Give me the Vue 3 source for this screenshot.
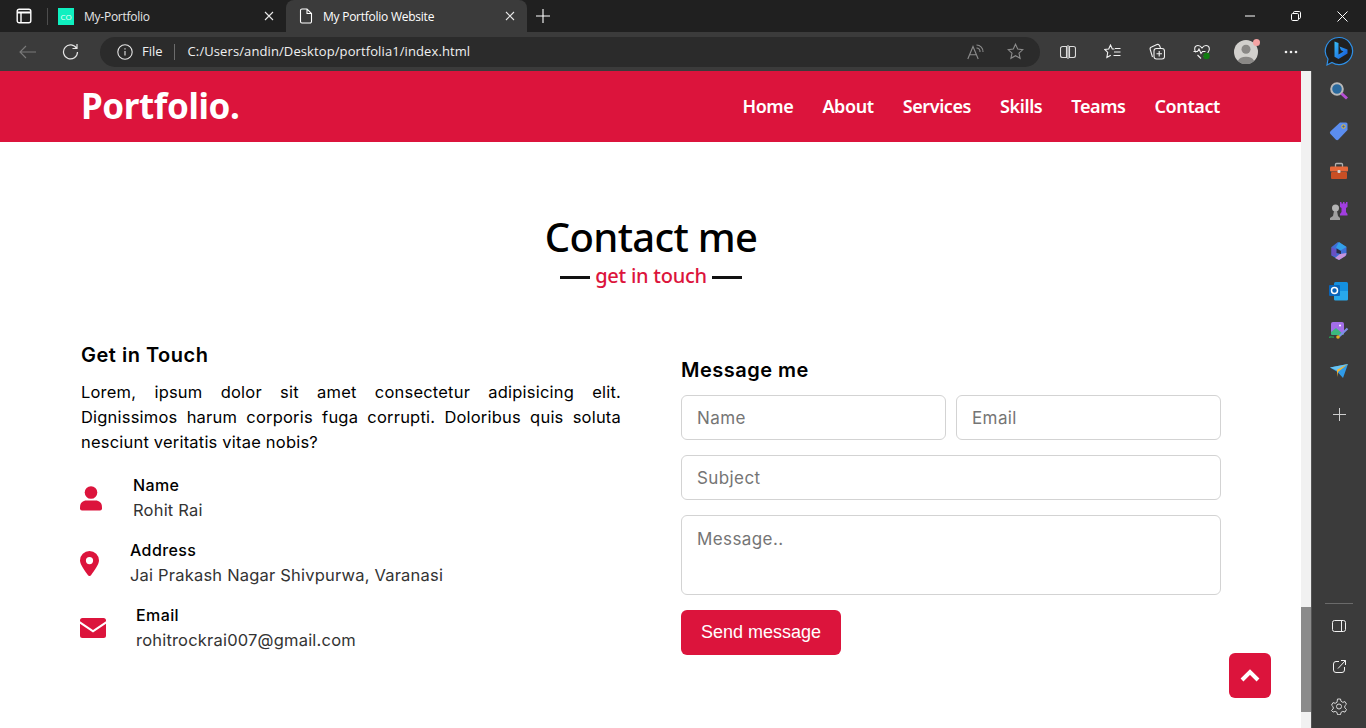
<script setup>
const navLinks = ['Home', 'About', 'Services', 'Skills', 'Teams', 'Contact']
</script>

<template>
  <div class="window">
    <!-- browser tab strip -->
    <div class="tabstrip">
      <svg class="tabs-btn" width="16" height="16" viewBox="0 0 16 16" fill="none" stroke="#fff" stroke-width="1.400"><rect x="1.200" y="1.200" width="13.600" height="13.600" rx="2"/><path d="M1.200 4.500h13.600" stroke-width="2"/><path d="M5 5v9.500"/></svg>
      <div class="strip-sep"></div>
      <div class="tab">
        <span class="favicon">CO</span>
        <span class="tab-title">My-Portfolio</span>
        <svg class="tab-close" width="10" height="10" viewBox="0 0 10 10" stroke="#e8e8e8" stroke-width="1.100"><path d="M1 1l8 8M9 1l-8 8"/></svg>
      </div>
      <div class="tab active">
        <svg class="page-icon" width="14" height="16" viewBox="0 0 14 16" fill="none" stroke="#fff" stroke-width="1.100"><path d="M1.500 2.500a1.500 1.500 0 0 1 1.500-1.500h5l4.500 4.500v8a1.500 1.500 0 0 1-1.500 1.500h-8a1.500 1.500 0 0 1-1.500-1.500zM8 1v4.500h4.500"/></svg>
        <span class="tab-title">My Portfolio Website</span>
        <svg class="tab-close" width="10" height="10" viewBox="0 0 10 10" stroke="#e8e8e8" stroke-width="1.100"><path d="M1 1l8 8M9 1l-8 8"/></svg>
      </div>
      <svg class="new-tab" width="14" height="14" viewBox="0 0 14 14" stroke="#fff" stroke-width="1.100"><path d="M7 0v14M0 7h14"/></svg>
      <div class="win-btns">
        <svg width="10" height="10" viewBox="0 0 10 10" stroke="#fff"><path d="M0 5h10"/></svg>
        <svg width="10" height="10" viewBox="0 0 10 10" fill="none" stroke="#fff"><rect x=".5" y="2.500" width="7" height="7" rx="1.200"/><path d="M2.500 2.500v-.8a1.200 1.200 0 0 1 1.200-1.200h4.600a1.200 1.200 0 0 1 1.200 1.200v4.600a1.200 1.200 0 0 1-1.200 1.200h-.8"/></svg>
        <svg width="11" height="11" viewBox="0 0 11 11" stroke="#fff"><path d="M.5.5l10 10M10.500.5l-10 10"/></svg>
      </div>
    </div>

    <!-- browser toolbar -->
    <div class="toolbar">
      <svg class="back" width="18" height="14" viewBox="0 0 18 14" fill="none" stroke="#7b7b7b" stroke-width="1.100"><path d="M17 7H1M7 1L1 7l6 6"/></svg>
      <svg class="reload" width="17" height="17" viewBox="0 0 17 17" fill="none" stroke="#e6e6e6" stroke-width="1.200"><path d="M14.600 5.500A7 7 0 1 0 15.500 9M15 1v4.500h-4.500"/></svg>
      <div class="address">
        <svg width="16" height="16" viewBox="0 0 16 16" fill="none" stroke="#e6e6e6" stroke-width="1.100"><circle cx="8" cy="8" r="7.200"/><path d="M8 7v4.500M8 4.300v1.200"/></svg>
        <span class="file">File</span>
        <span class="addr-sep"></span>
        <span class="url">C:/Users/andin/Desktop/portfolia1/index.html</span>
        <span class="addr-right">
          <svg width="17" height="16" viewBox="0 0 17 16" fill="none" stroke="#8c8c8c" stroke-width="1.100"><path d="M.8 15L6 2.500 11.200 15M2.600 10.800h6.800M9.500 1a6.500 6.500 0 0 1 6.500 7M9.500 4a3.500 3.500 0 0 1 3.500 4"/></svg>
          <svg width="17" height="17" viewBox="0 0 17 17" fill="none" stroke="#8c8c8c" stroke-width="1.100"><path d="M8.500 1.200l2.200 4.800 5.200.6-3.900 3.500 1.100 5.200-4.600-2.600-4.600 2.600 1.100-5.200L1.100 6.600l5.200-.6z"/></svg>
        </span>
      </div>
      <div class="tools">
        <svg width="16" height="14" viewBox="0 0 16 14" fill="none" stroke="#dcdcdc" stroke-width="1.100"><path d="M6.500 1.500H2.500a2 2 0 0 0-2 2v7a2 2 0 0 0 2 2h4zM9.500 1.500h4a2 2 0 0 1 2 2v7a2 2 0 0 1-2 2h-4zM8 0v14"/></svg>
        <svg width="17" height="16" viewBox="0 0 17 16" fill="none" stroke="#f0f0f0" stroke-width="1.100"><path d="M10.500 5H8.300L6.500 1 4.700 5 .8 5.500l2.900 2.900-.8 5.100 3.900-2.300M11 4.500h5.500M10 8h6.500M9.500 11.500h7"/></svg>
        <svg width="17" height="17" viewBox="0 0 17 17" fill="none" stroke="#f0f0f0" stroke-width="1.100"><path d="M4.500 14L2.200 6.500A2 2 0 0 1 3.500 4L9 1.500a2 2 0 0 1 2.500 1L12.500 5"/><rect x="6" y="5.500" width="10.500" height="10.500" rx="2.500"/><path d="M11.200 8v5.500M8.500 10.700H14"/></svg>
        <svg class="health" width="18" height="16" viewBox="0 0 18 16" fill="none" stroke="#f0f0f0" stroke-width="1.100"><path d="M3 8.500C.5 5.500 1.500 1.500 5 1.500c2 0 3 1 4 2.500 1-1.500 2-2.500 4-2.500 3.500 0 4.500 4 2 7L11 13M8 14.500L4.500 11"/><path d="M.5 7.500h4l1.500-2.500 2 4.500 1.500-2h3"/><circle cx="13.500" cy="12" r="3.200" fill="#107c10" stroke="none"/></svg>
        <span class="avatar">
          <svg width="24" height="24" viewBox="0 0 24 24"><circle cx="12" cy="12" r="12" fill="#d2d0cd"/><circle cx="12" cy="9.200" r="4.500" fill="#8a8886"/><path d="M3.800 21a8.800 6.500 0 0 1 16.400 0 12 12 0 0 1-16.400 0z" fill="#8a8886"/></svg>
          <i class="avatar-dot"></i>
        </span>
        <svg width="14" height="4" viewBox="0 0 14 4" fill="#f0f0f0"><circle cx="2" cy="2" r="1.300"/><circle cx="7" cy="2" r="1.300"/><circle cx="12" cy="2" r="1.300"/></svg>
      </div>
      <svg class="bing" width="30" height="31" viewBox="0 0 30 31" fill="none">
        <defs><linearGradient id="bingGrad" x1="0" y1="0" x2="1" y2="1"><stop offset="0" stop-color="#37bdf6"/><stop offset="1" stop-color="#1455d9"/></linearGradient></defs>
        <path d="M15 1.500a13.500 13.500 0 1 1-7 25l-5 2.500 1-6A13.500 13.500 0 0 1 15 1.500z" fill="#202020" stroke="#2e8fe6" stroke-width="1.200"/>
        <path d="M10.500 5.500l4 1.500v11.500l5-3-2.500-1.200-1.500-3.800 8 3v4l-9 5.500-4-2.200z" fill="url(#bingGrad)"/>
      </svg>
    </div>

    <div class="viewport">
      <!-- the portfolio page -->
      <div class="page">
        <nav class="navbar">
          <div class="logo">Portfolio.</div>
          <ul class="menu">
            <li v-for="link in navLinks" :key="link">{{ link }}</li>
          </ul>
        </nav>

        <section class="contact">
          <h2 class="title">Contact me</h2>
          <div class="subtitle"><i></i><span>get in touch</span><i></i></div>

          <div class="columns">
            <div class="col-left">
              <h3 class="col-head">Get in Touch</h3>
              <p class="intro">Lorem, ipsum dolor sit amet consectetur adipisicing elit. Dignissimos harum corporis fuga corrupti. Doloribus quis soluta nesciunt veritatis vitae nobis?</p>
              <div class="info-row">
                <svg class="info-icon user" width="22" height="25" viewBox="0 0 22 25" fill="#dc143c"><circle cx="11" cy="6.500" r="6.300"/><path d="M0 21.500c0-5 3-7 6.500-7h9c3.500 0 6.500 2 6.500 7v1a2 2 0 0 1-2 2H2a2 2 0 0 1-2-2z"/></svg>
                <div>
                  <div class="info-head">Name</div>
                  <div class="info-sub">Rohit Rai</div>
                </div>
              </div>
              <div class="info-row">
                <svg class="info-icon pin" width="19" height="25" viewBox="0 0 19 25"><path fill="#dc143c" fill-rule="evenodd" d="M9.500 0A9.500 9.500 0 0 1 19 9.500c0 4-5 10.500-8 14.700a1.800 1.800 0 0 1-3 0C5 20 0 13.500 0 9.500A9.500 9.500 0 0 1 9.500 0zm0 6a3.600 3.600 0 1 0 0 7.200 3.600 3.600 0 0 0 0-7.200z"/></svg>
                <div>
                  <div class="info-head">Address</div>
                  <div class="info-sub">Jai Prakash Nagar Shivpurwa, Varanasi</div>
                </div>
              </div>
              <div class="info-row">
                <svg class="info-icon mail" width="26" height="20" viewBox="0 0 26 20" fill="#dc143c"><path d="M2.500 0h21A2.500 2.500 0 0 1 26 2.500v.7L13 12 0 3.200v-.7A2.500 2.500 0 0 1 2.500 0z"/><path d="M0 5.800l13 8.700 13-8.700V17.500a2.500 2.500 0 0 1-2.500 2.500h-21A2.500 2.500 0 0 1 0 17.500z"/></svg>
                <div>
                  <div class="info-head">Email</div>
                  <div class="info-sub">rohitrockrai007@gmail.com</div>
                </div>
              </div>
            </div>

            <form class="col-right" @submit.prevent>
              <h3 class="col-head">Message me</h3>
              <div class="field-row">
                <input type="text" placeholder="Name" />
                <input type="text" placeholder="Email" />
              </div>
              <input type="text" placeholder="Subject" />
              <textarea placeholder="Message.."></textarea>
              <button class="send" type="submit">Send message</button>
            </form>
          </div>
        </section>

        <a class="scroll-top">
          <svg width="20" height="13" viewBox="0 0 20 13" fill="none" stroke="#fff" stroke-width="4"><path d="M2 11l8-8 8 8"/></svg>
        </a>
      </div>

      <div class="scrollbar"><div class="thumb"></div></div>

      <!-- edge sidebar -->
      <aside class="sidebar">
        <div class="side-top">
          <svg width="20" height="20" viewBox="0 0 20 20"><circle cx="8" cy="8" r="5.800" fill="#2a6a9e" stroke="#b9b9b9" stroke-width="2"/><path d="M12.500 12.500l5.500 5" stroke="#b74fd6" stroke-width="3"/></svg>
          <svg width="20" height="20" viewBox="0 0 20 20"><path d="M11 1.500h6a1.500 1.500 0 0 1 1.500 1.500v6L9.500 18.500a2 2 0 0 1-2.800 0L1.500 13a2 2 0 0 1 0-2.800z" fill="#5b8def"/><circle cx="14.500" cy="5.500" r="1.700" fill="#3a5fc0" stroke="#f3c623"/></svg>
          <svg width="20" height="18" viewBox="0 0 20 18"><path d="M6.500 5V2.500a1 1 0 0 1 1-1h5a1 1 0 0 1 1 1V5" fill="none" stroke="#b0b0b0" stroke-width="1.300"/><rect x="1" y="4.500" width="18" height="5" rx="1" fill="#e8683a"/><rect x="2" y="10" width="16" height="7" rx="1" fill="#c94f24"/><rect x="8.500" y="8" width="3" height="3" rx="1" fill="#d8d8d8"/></svg>
          <svg width="20" height="20" viewBox="0 0 20 20"><circle cx="6.500" cy="7" r="3.500" fill="#b4b4b4"/><path d="M5 10h3l1 5 2 2v2H1v-2l3-2z" fill="#a0a0a0"/><path d="M11 1h1.500v1.500H14V1h1.500v1.500H17V1h1.500v5L17 7v4l1.500 2v1.500H11V13l1.500-2V7L11 6z" fill="#a23ee0"/></svg>
          <svg width="20" height="20" viewBox="0 0 20 20"><path d="M9 1l8.500 5v8L10 19 2.500 14.500V6z" fill="#3f6fd8"/><path d="M10 1l7.500 5-6 3.500L7 6.500z" fill="#32a0e8"/><path d="M2.500 6l5 3v6l-5-.5z" fill="#6a4fc4"/><path d="M11 13l6.500-1-1 3L10 19l-4-2z" fill="#c693dc"/><path d="M7.500 7.500l4.500 2.500v3l-4.500-1z" fill="#2b2b45"/></svg>
          <svg width="20" height="20" viewBox="0 0 20 20"><rect x="5" y="1" width="14" height="18" rx="1.500" fill="#1490df"/><path d="M5 10l14 0v8a1.500 1.500 0 0 1-1.500 1.500h-11A1.500 1.500 0 0 1 5 18z" fill="#28a8ea"/><rect x="0" y="4" width="11" height="11" rx="1" fill="#0a64b8"/><circle cx="5.500" cy="9.500" r="3" fill="none" stroke="#fff" stroke-width="1.500"/></svg>
          <svg width="20" height="20" viewBox="0 0 20 20"><rect x="2" y="1" width="13" height="13" rx="2" fill="#a36ee8"/><path d="M2 11l5-4 8 7H3.500A1.500 1.500 0 0 1 2 12.500z" fill="#3cb97e"/><circle cx="11" cy="4.500" r="1" fill="#fff"/><path d="M10 15.500L18.500 7.500" stroke="#7d8fe8" stroke-width="2.200"/><circle cx="9" cy="16" r="1.800" fill="#e8b020"/><path d="M0 16.500c2-1.500 3 0 5-.5" fill="none" stroke="#2aa55a" stroke-width="1.100"/></svg>
          <svg width="18" height="14" viewBox="0 0 18 14"><path d="M0 3.500L18 0 13 14 7.500 8z" fill="#2f9be8"/><path d="M0 3.500L18 0 7 6.500z" fill="#69c4f2"/><path d="M7 5.800L18 0 8 8l-1 5z" fill="#f5b533"/></svg>
          <svg class="side-plus" width="13" height="13" viewBox="0 0 13 13" stroke="#cfcfcf" stroke-width="1"><path d="M6.500 0v13M0 6.500h13"/></svg>
        </div>
        <div class="side-bottom">
          <div class="side-rule"></div>
          <svg width="14" height="12" viewBox="0 0 14 12" fill="none" stroke="#f0f0f0"><rect x=".5" y=".5" width="13" height="11" rx="2"/><path d="M9.500 .5v11"/></svg>
          <svg width="13" height="13" viewBox="0 0 13 13" fill="none" stroke="#f0f0f0"><path d="M6 1.500H3a2.500 2.500 0 0 0-2.500 2.500v6A2.500 2.500 0 0 0 3 12.500h6a2.500 2.500 0 0 0 2.500-2.500V7M5 8.500L12.500.5M8 .5h4.500V5"/></svg>
          <svg width="16" height="17" viewBox="0 0 16 17" fill="none" stroke="#d8d8d8"><path d="M6.500 1h3l.5 2.300 1.800 1 2.200-.7 1.500 2.600-1.700 1.600v2.100l1.700 1.600-1.500 2.600-2.200-.7-1.800 1-.5 2.300h-3l-.5-2.300-1.800-1-2.200.7L.5 12.500l1.700-1.600V8.800L.5 7.200 2 4.600l2.200.7 1.800-1z"/><circle cx="8" cy="8.500" r="2.500"/></svg>
        </div>
      </aside>
    </div>
  </div>
</template>

<style>
html, body {
  margin: 0;
  overflow: hidden;
}
</style>

<style scoped>
.window {
  width: 1366px;
  height: 728px;
  display: flex;
  flex-direction: column;
  overflow: hidden;
  background: #fff;
  font-family: "Open Sans", "Liberation Sans", sans-serif;
}

.tabstrip {
  height: 32px;
  background: #202020;
  display: flex;
  align-items: center;
  flex: none;
}
.tabs-btn { margin-left: 16px; }
.strip-sep {
  width: 1px;
  height: 17px;
  background: #4d4d4d;
  margin: 0 10px 0 15px;
}
.tab {
  width: 228px;
  height: 32px;
  display: flex;
  align-items: center;
  color: #e6e6e6;
  font-size: 12px;
  letter-spacing: -0.25px;
  box-sizing: border-box;
}
.tab.active {
  width: 241px;
  background: #3b3b3b;
  border-radius: 8px 8px 0 0;
  color: #fff;
  padding-left: 13px;
}
.favicon {
  width: 16px;
  height: 17px;
  background: #0ff0c0;
  color: #f4fff8;
  font-size: 8px;
  line-height: 17px;
  text-align: center;
  margin-right: 10px;
  flex: none;
}
.page-icon { margin-right: 10px; flex: none; }
.tab-title { flex: 1; white-space: nowrap; }
.tab-close { flex: none; margin-right: 12px; }
.new-tab { margin-left: 9px; }
.win-btns {
  margin-left: auto;
  margin-right: 18px;
  display: flex;
  align-items: center;
  gap: 36px;
}

.toolbar {
  height: 39px;
  background: #3b3b3b;
  display: flex;
  align-items: center;
  flex: none;
  position: relative;
}
.back { margin-left: 19px; }
.reload { margin-left: 25px; }
.address {
  width: 940px;
  height: 30px;
  margin-left: 21px;
  background: #2b2b2b;
  border-radius: 15px;
  display: flex;
  align-items: center;
  padding-left: 17px;
  box-sizing: border-box;
  color: #f0f0f0;
  font-size: 13px;
}
.file { margin: -2px 0 0 9px; }
.addr-sep {
  width: 1px;
  height: 16px;
  background: #6c6c6c;
  margin: 0 13px 0 11px;
}
.url { letter-spacing: 0.1px; margin-top: -2px; }
.addr-right {
  margin-left: auto;
  margin-right: 16px;
  display: flex;
  align-items: center;
  gap: 23px;
}
.tools {
  display: flex;
  align-items: center;
  gap: 27.5px;
  margin-left: 20px;
}
.avatar {
  position: relative;
  width: 24px;
  height: 24px;
  margin: 0 -2px 0 -4px;
}
.avatar svg { display: block; }
.avatar-dot {
  position: absolute;
  right: -2px;
  top: -1px;
  width: 7px;
  height: 7px;
  background: #f5a3a3;
  border-radius: 50%;
}
.bing { margin-left: 26px; }

.viewport {
  flex: 1;
  min-height: 0;
  display: flex;
}
.page {
  width: 1301px;
  position: relative;
  flex: none;
  background: #fff;
  font-family: Inter, "Liberation Sans", sans-serif;
}

.navbar {
  height: 71px;
  background: crimson;
  display: flex;
  align-items: center;
  justify-content: space-between;
  padding: 0 81px 0 81px;
  color: #fff;
  font-family: "Noto Sans", "Open Sans", sans-serif;
}
.logo {
  font-size: 35px;
  font-weight: 700;
  letter-spacing: -0.4px;
  margin-top: -2px;
}
.menu {
  display: flex;
  list-style: none;
  gap: 29px;
  margin: -2px 0 0;
  padding: 0;
  font-size: 18px;
  font-weight: 600;
  letter-spacing: -0.4px;
}

.contact {
  padding: 70px 80px 0 81px;
}
.title {
  margin: 0;
  font-family: "Noto Sans", "Open Sans", sans-serif;
  font-size: 40px;
  font-weight: 500;
  letter-spacing: -0.7px;
  line-height: 50px;
  text-align: center;
  color: #000;
}
.subtitle {
  display: flex;
  justify-content: center;
  align-items: center;
  gap: 5px;
  height: 28px;
  color: crimson;
  font-family: "Noto Sans", "Open Sans", sans-serif;
  font-size: 20px;
  font-weight: 500;
  letter-spacing: -0.25px;
}
.subtitle span { margin-top: -2px; }
.subtitle i {
  width: 30px;
  height: 3px;
  background: #111;
  margin-top: 2px;
}

.columns {
  display: flex;
  gap: 60px;
  margin-top: 50px;
}
.col-left, .col-right {
  width: 540px;
  flex: none;
}
.col-head {
  margin: 0;
  font-size: 20px;
  font-weight: 600;
  letter-spacing: 0.5px;
  line-height: 30px;
  color: #000;
}
.intro {
  margin: 10px 0 0;
  font-size: 16.5px;
  letter-spacing: 0.2px;
  line-height: 25px;
  text-align: justify;
  color: #000;
}
.info-row {
  display: flex;
  align-items: center;
  gap: 27px;
  height: 50px;
  margin-top: 15px;
}
.info-row:first-of-type { margin-top: 18px; }
.info-icon { flex: none; margin-left: -1px; }
.user { margin-right: 4px; }
.pin { margin-right: 4px; }
.mail { margin-right: 3px; }
.info-head {
  font-size: 16px;
  font-weight: 500;
  letter-spacing: 0.4px;
  line-height: 25px;
  color: #000;
}
.info-sub {
  font-size: 16.5px;
  letter-spacing: 0.2px;
  line-height: 25px;
  color: #333;
}

.col-right {
  display: flex;
  flex-direction: column;
  gap: 15px;
  padding-top: 15px;
}
.col-right .col-head { margin-bottom: -5px; }
.field-row {
  display: flex;
  gap: 10px;
}
.field-row input { flex: 1; width: 0; }
input, textarea {
  height: 45px;
  box-sizing: border-box;
  border: 1px solid #d3d3d3;
  border-radius: 6px;
  padding: 0 15px;
  font-family: Inter, "Liberation Sans", sans-serif;
  font-size: 17px;
  letter-spacing: 0.4px;
  outline: none;
  background: #fff;
}
input::placeholder, textarea::placeholder { color: #757575; }
textarea {
  height: 80px;
  padding-top: 13px;
  resize: none;
}
.send {
  width: 160px;
  height: 45px;
  border: 0;
  border-radius: 6px;
  background: crimson;
  color: #fff;
  font-family: "Liberation Sans", sans-serif;
  font-size: 18px;
}

.scroll-top {
  position: absolute;
  left: 1229px;
  top: 582px;
  width: 42px;
  height: 45px;
  border-radius: 6px;
  background: crimson;
  display: flex;
  align-items: center;
  justify-content: center;
}

.scrollbar {
  width: 10px;
  flex: none;
  background: #f1f1f1;
  position: relative;
}
.thumb {
  position: absolute;
  left: 0;
  right: 0;
  top: 536px;
  height: 105px;
  background: #8b8b8b;
}

.sidebar {
  flex: 1;
  background: #3b3b3b;
  border-left: 1px solid #555;
  display: flex;
  flex-direction: column;
  justify-content: space-between;
  align-items: center;
  overflow: hidden;
}
.side-top {
  display: grid;
  grid-auto-rows: 40px;
  place-items: center;
}
.side-plus { margin-top: 6px; }
.side-bottom {
  display: grid;
  grid-template-rows: 4px repeat(3, 40px);
  place-items: center;
  padding-bottom: 2px;
}
.side-rule {
  width: 28px;
  height: 1px;
  background: #6a6a6a;
  align-self: start;
  margin-top: 1px;
}
</style>
